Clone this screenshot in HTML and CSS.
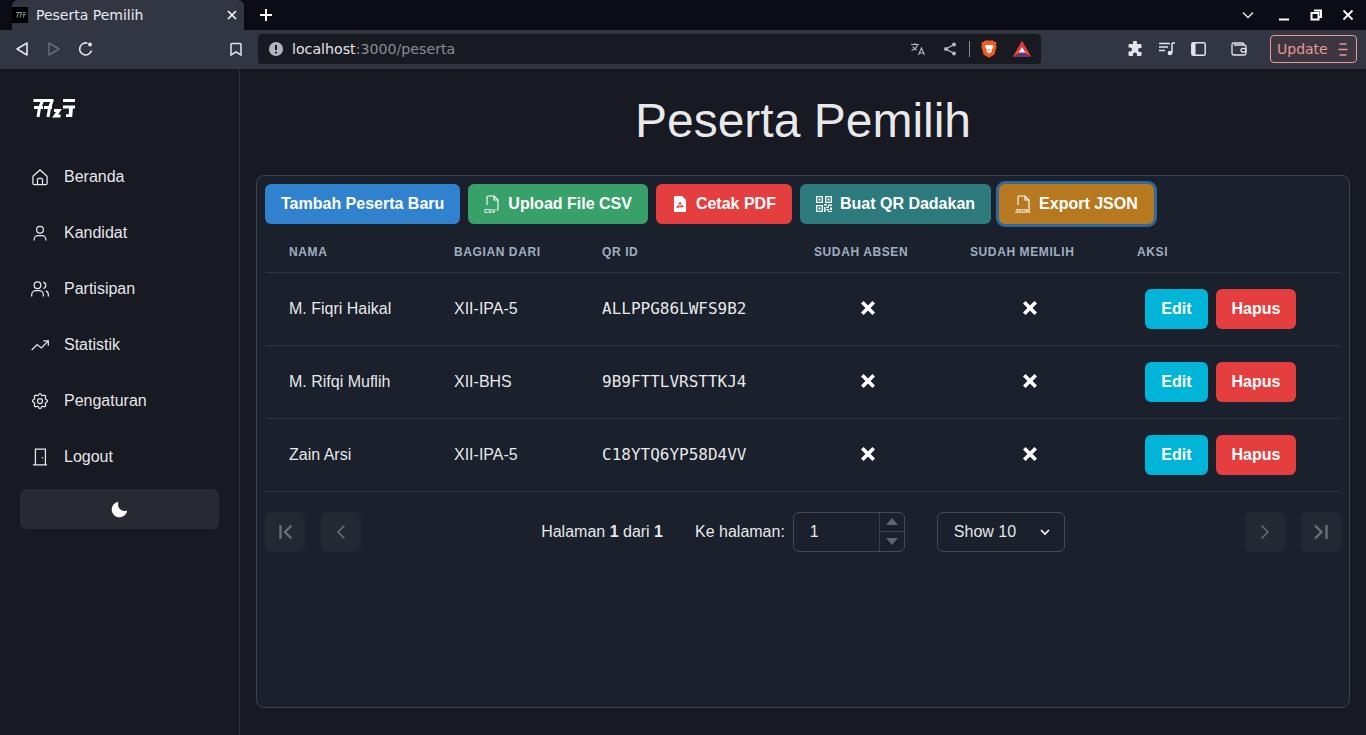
FILE: index.html
```html
<!DOCTYPE html>
<html lang="id">
<head>
    <meta charset="UTF-8">
    <meta name="viewport" content="width=device-width, initial-scale=1.0">
    <title>Peserta Pemilih</title>
    <link rel="stylesheet" href="styles.css">
</head>
<body>
  <!-- browser chrome -->
  <div class="tabbar">
      <div class="tab">
          <span class="favicon"><svg width="11" height="6" viewBox="0 0 20 12"><path d="M1 1h5L3 11M7 1h5L9 11M15 1h5M14 5h6M17 5l-1 6" fill="none" stroke="#bbb" stroke-width="1.6"/></svg></span>
          <span class="tab-title">Peserta Pemilih</span>
          <svg class="tab-close" width="10" height="10" viewBox="0 0 10 10"><path d="M1 1l8 8M9 1l-8 8" stroke="#fff" stroke-width="1.6"/></svg>
      </div>
      <svg class="new-tab" width="14" height="14" viewBox="0 0 14 14"><path d="M7 1v12M1 7h12" stroke="#fff" stroke-width="2"/></svg>
      <div class="win-controls">
          <svg class="win-chevron" width="12" height="8" viewBox="0 0 12 8"><path d="M1 1.5l5 5 5-5" fill="none" stroke="#e4e5ea" stroke-width="1.5"/></svg>
          <svg width="12" height="12" viewBox="0 0 12 12"><path d="M1 10.5h10" stroke="#fff" stroke-width="2"/></svg>
          <svg width="12" height="12" viewBox="0 0 12 12"><path d="M4 1.500h7v6.500h-2.500M1.500 4h7v6.500h-7z" fill="none" stroke="#fff" stroke-width="2"/></svg>
          <svg width="12" height="12" viewBox="0 0 12 12"><path d="M1.500 1.500l9 9M10.500 1.500l-9 9" stroke="#fff" stroke-width="1.8"/></svg>
      </div>
  </div>
  <div class="toolbar">
      <span class="tb-btn"><svg width="14" height="16" viewBox="0 0 14 16"><path d="M12 2v12L2 8z" fill="none" stroke="#e4e5ea" stroke-width="1.6" stroke-linejoin="round"/></svg></span>
      <span class="tb-btn"><svg width="14" height="16" viewBox="0 0 14 16"><path d="M2 2v12l10-6z" fill="none" stroke="#686c78" stroke-width="1.5" stroke-linejoin="round"/></svg></span>
      <span class="tb-btn"><svg width="16" height="16" viewBox="0 0 16 16"><path d="M13.500 9.500A6 6 0 1 1 9.500 2.200" fill="none" stroke="#e4e5ea" stroke-width="1.6"/><circle cx="12" cy="3.500" r="2" fill="#e4e5ea"/></svg></span>
      <span class="tb-btn bookmark"><svg width="12" height="14" viewBox="0 0 12 14"><path d="M2 1.500h8a1 1 0 0 1 1 1V13L6 9.800 1 13V2.500a1 1 0 0 1 1-1z" fill="none" stroke="#e4e5ea" stroke-width="1.5"/></svg></span>
      <div class="address">
          <svg class="info" width="14" height="14" viewBox="0 0 14 14"><circle cx="7" cy="7" r="7" fill="#b4b6be"/><path d="M7 3v5" stroke="#181a21" stroke-width="2"/><circle cx="7" cy="10.500" r="1.100" fill="#181a21"/></svg>
          <span class="url">localhost<span class="url-dim">:3000/peserta</span></span>
          <div class="address-icons">
              <svg class="translate" width="16" height="14" viewBox="0 0 16 14"><path d="M1 2.500h8M5 1v1.500M7.500 2.500C6.800 5 4.500 7.500 1.500 8.500M2.800 4.500c.8 1.600 2.400 3 4 3.800M8.500 13l3-7 3 7M9.500 11h4" fill="none" stroke="#b4b6be" stroke-width="1.1"/></svg>
              <svg class="share" width="14" height="14" viewBox="0 0 14 14"><path d="M11 2.500L3 7l8 4.500" fill="none" stroke="#b4b6be" stroke-width="1.4"/><circle cx="11" cy="2.500" r="2" fill="#b4b6be"/><circle cx="3" cy="7" r="2" fill="#b4b6be"/><circle cx="11" cy="11.500" r="2" fill="#b4b6be"/></svg>
              <span class="addr-sep"></span>
              <svg class="brave" width="16" height="18" viewBox="0 0 16 18"><path d="M4 .5h8l1.500 1.600L15.500 2 15 4.500l.7 1.500-2.200 8.500L8 17.800 2.500 14.500.3 6 1 4.500.5 2l2 .1z" fill="#f15a22"/><path d="M4 5.500L6.500 4.800 8 5.500l1.500-.7 2.500.7.500 1.500-2 3 .5 1.500L8 13.500 5.500 11.500 6 10 4 7z" fill="#fff"/><path d="M6.500 9.500h3L8 11z" fill="#f15a22"/></svg>
              <svg class="bat" width="18" height="16" viewBox="0 0 18 16"><path d="M9 0l9 15.500H0z" fill="#ff5000"/><path d="M0 15.500L9 10l9 5.500z" fill="#662d91"/><path d="M9 0L4 10l5 0 5 0z" fill="#e0314b"/><path d="M9 6l3.300 5.500H5.700z" fill="#fff"/></svg>
          </div>
      </div>
      <div class="toolbar-right">
          <svg width="16" height="16" viewBox="0 0 16 16"><path d="M6 1.500a2 2 0 0 1 4 0V3h3.500a1 1 0 0 1 1 1v3H13a2 2 0 0 0 0 4h1.500v3a1 1 0 0 1-1 1H10v-1.500a2 2 0 0 0-4 0V15H2.500a1 1 0 0 1-1-1v-3.500H3a2 2 0 0 0 0-4H1.500V4a1 1 0 0 1 1-1H6z" fill="#e4e5ea"/></svg>
          <svg width="16" height="14" viewBox="0 0 16 14"><path d="M0 1.500h11M0 5h9M0 8.500h6" stroke="#e4e5ea" stroke-width="1.4"/><path d="M13 1v10M13 1h3" stroke="#e4e5ea" stroke-width="1.5"/><circle cx="11" cy="11" r="2.300" fill="#e4e5ea"/></svg>
          <svg width="15" height="14" viewBox="0 0 15 14"><rect x=".8" y=".8" width="13.400" height="12.400" rx="1.500" fill="none" stroke="#e4e5ea" stroke-width="1.5"/><rect x="1" y="1" width="3.500" height="12" fill="#e4e5ea"/></svg>
          <svg class="wallet" width="16" height="14" viewBox="0 0 16 14"><path d="M13 3V2.500a1.500 1.500 0 0 0-1.500-1.500H2.500A1.500 1.500 0 0 0 1 2.500v8.500A2 2 0 0 0 3 13h10.500a1.500 1.500 0 0 0 1.500-1.500v-7A1.500 1.500 0 0 0 13.500 3H3" fill="none" stroke="#e4e5ea" stroke-width="1.3"/><rect x="10" y="6.500" width="5" height="3.500" rx="1.500" fill="none" stroke="#e4e5ea" stroke-width="1.3"/></svg>
          <div class="update">
              <span>Update</span>
              <svg width="10" height="13" viewBox="0 0 10 13"><path d="M1.500 1h7M.500 6.500h9M1.500 12h7" stroke="#e59b96" stroke-width="1.4"/></svg>
          </div>
      </div>
  </div>

  <div class="app">
      <aside class="sidebar">
          <div class="logo">
              <svg width="42" height="19" viewBox="0 0 42 19"><path d="M.5 1.500h10.500M1 8.500h9M9.500 2L6.500 9 5 18M11 1.500h9.500M11 8.500h8M19 2l-2.500 7-1.500 9M21 11.500h5L22 17h5.500M30 1.500h12M30 8h12" fill="none" stroke="#fff" stroke-width="3"/><path d="M36 8h4l-.8 10H33v-2.800h2.800z" fill="#fff"/></svg>
          </div>
          <nav class="nav">
              <a class="nav-item">
                  <svg class="nav-icon" viewBox="0 0 24 24"><path d="M3.500 11L12 3.500l8.500 7.500v8.500a1.500 1.500 0 0 1-1.500 1.500H5a1.500 1.500 0 0 1-1.500-1.500zM9 21v-6a1.500 1.500 0 0 1 1.500-1.500h3A1.500 1.500 0 0 1 15 15v6"/></svg>
                  Beranda
              </a>
              <a class="nav-item">
                  <svg class="nav-icon" viewBox="0 0 24 24"><circle cx="12" cy="8" r="4"/><path d="M5 21v-1.500A4.500 4.500 0 0 1 9.500 15h5a4.500 4.500 0 0 1 4.500 4.500V21"/></svg>
                  Kandidat
              </a>
              <a class="nav-item">
                  <svg class="nav-icon" viewBox="0 0 24 24"><circle cx="9" cy="7.500" r="4"/><path d="M2 21v-2a5 5 0 0 1 5-5h4a5 5 0 0 1 5 5v2M16 3.700a4 4 0 0 1 0 7.700M19 14.300a5 5 0 0 1 3 4.700v2"/></svg>
                  Partisipan
              </a>
              <a class="nav-item">
                  <svg class="nav-icon" viewBox="0 0 24 24"><path d="M2 18l6.500-6.500 5 4L22 7M16 7h6v6"/></svg>
                  Statistik
              </a>
              <a class="nav-item">
                  <svg class="nav-icon" viewBox="0 0 24 24"><path d="M10.325 4.317c.426-1.756 2.924-1.756 3.35 0a1.724 1.724 0 002.573 1.066c1.543-.94 3.31.826 2.37 2.37a1.724 1.724 0 001.065 2.572c1.756.426 1.756 2.924 0 3.35a1.724 1.724 0 00-1.066 2.573c.94 1.543-.826 3.31-2.37 2.37a1.724 1.724 0 00-2.572 1.065c-.426 1.756-2.924 1.756-3.35 0a1.724 1.724 0 00-2.573-1.066c-1.543.94-3.31-.826-2.37-2.37a1.724 1.724 0 00-1.065-2.572c-1.756-.426-1.756-2.924 0-3.35a1.724 1.724 0 001.066-2.573c-.94-1.543.826-3.31 2.37-2.37.996.608 2.296.07 2.572-1.065z"/><circle cx="12" cy="12" r="3"/></svg>
                  Pengaturan
              </a>
              <a class="nav-item">
                  <svg class="nav-icon" viewBox="0 0 24 24"><path d="M3.500 21.500h17M6.500 21.500V2.500h12v19M15 12v1.500"/></svg>
                  Logout
              </a>
          </nav>
          <button class="theme-btn" type="button"><svg width="17" height="17" viewBox="0 0 24 24"><path d="M21.400 13.700C20.600 13.900 19.800 14 19 14c-5 0-9-4-9-9 0-.8.100-1.600.3-2.400.1-.3 0-.7-.3-1-.3-.3-.6-.4-1-.3C4.300 2.700 1 7.100 1 12c0 6.100 4.900 11 11 11 4.900 0 9.300-3.300 10.600-8.100.1-.3 0-.7-.3-1-.2-.2-.6-.3-.9-.2z" fill="#fff"/></svg></button>
      </aside>

      <main class="main">
          <h1>Peserta Pemilih</h1>
          <div class="card">
              <div class="actions">
                  <button class="btn btn-blue" type="button">Tambah Peserta Baru</button>
                  <button class="btn btn-green" type="button">
                      <svg class="file-icon" width="16" height="18" viewBox="0 0 16 18"><path d="M3 10V2a1 1 0 0 1 1-1h6l4 4v9a1 1 0 0 1-1 1h-.500M10 1v4h4" fill="none" stroke="#fff" stroke-width="1.1"/><text x="0" y="17.500" class="file-label">CSV</text></svg>
                      Upload File CSV
                  </button>
                  <button class="btn btn-red" type="button">
                      <svg width="16" height="16" viewBox="-2 0 16 16"><path d="M1 0h7l4 4v11a1 1 0 0 1-1 1H1a1 1 0 0 1-1-1V1a1 1 0 0 1 1-1z" fill="#fff"/><path d="M6 6c-.2 1.800-1.500 4-3.500 5.500M6 6c.3 2 1.500 3.800 3.500 4.800-2.500-.4-5-.2-7 .7" fill="none" stroke="#e53e3e" stroke-width="1.1"/></svg>
                      Cetak PDF
                  </button>
                  <button class="btn btn-teal" type="button">
                      <svg width="16" height="16" viewBox="0 0 16 16" fill="#fff"><path d="M0 0h7v7H0zM1.300 1.300v4.400h4.400V1.300zM9 0h7v7H9zM10.300 1.300v4.400h4.400V1.300zM0 9h7v7H0zM1.300 10.300v4.400h4.400v-4.400z" fill-rule="evenodd"/><path d="M2.500 2.500h2v2h-2zM11.500 2.500h2v2h-2zM2.500 11.500h2v2h-2zM8 8h3v1.500H8zM12 8.500h4V10h-4zM8 11h1.500v5H8zM10.500 10.500H13V12h-2.500zM14 11.500h2V14h-2zM10.500 13H13v1.500h-2.500zM12 15h4v1h-4z"/></svg>
                      Buat QR Dadakan
                  </button>
                  <button class="btn btn-orange" type="button">
                      <svg class="file-icon" width="16" height="18" viewBox="0 0 16 18"><path d="M3 10V2a1 1 0 0 1 1-1h6l4 4v9M10 1v4h4" fill="none" stroke="#fff" stroke-width="1.1"/><text x="0" y="17.500" class="file-label">JSON</text></svg>
                      Export JSON
                  </button>
              </div>

              <table class="table">
                  <thead>
                      <tr>
                          <th class="col-nama">Nama</th>
                          <th class="col-bagian">Bagian Dari</th>
                          <th class="col-qr">QR ID</th>
                          <th class="col-absen">Sudah Absen</th>
                          <th class="col-memilih">Sudah Memilih</th>
                          <th class="col-aksi">Aksi</th>
                      </tr>
                  </thead>
                  <tbody>
                      <tr>
                          <td>M. Fiqri Haikal</td>
                          <td>XII-IPA-5</td>
                          <td class="mono">ALLPPG86LWFS9B2</td>
                          <td class="center"><svg class="cross" viewBox="0 0 14 14"><path d="M2 2l10 10M12 2L2 12"/></svg></td>
                          <td class="center"><svg class="cross" viewBox="0 0 14 14"><path d="M2 2l10 10M12 2L2 12"/></svg></td>
                          <td><div class="row-actions"><button class="btn btn-cyan" type="button">Edit</button><button class="btn btn-red" type="button">Hapus</button></div></td>
                      </tr>
                      <tr>
                          <td>M. Rifqi Muflih</td>
                          <td>XII-BHS</td>
                          <td class="mono">9B9FTTLVRSTTKJ4</td>
                          <td class="center"><svg class="cross" viewBox="0 0 14 14"><path d="M2 2l10 10M12 2L2 12"/></svg></td>
                          <td class="center"><svg class="cross" viewBox="0 0 14 14"><path d="M2 2l10 10M12 2L2 12"/></svg></td>
                          <td><div class="row-actions"><button class="btn btn-cyan" type="button">Edit</button><button class="btn btn-red" type="button">Hapus</button></div></td>
                      </tr>
                      <tr>
                          <td>Zain Arsi</td>
                          <td>XII-IPA-5</td>
                          <td class="mono">C18YTQ6YP58D4VV</td>
                          <td class="center"><svg class="cross" viewBox="0 0 14 14"><path d="M2 2l10 10M12 2L2 12"/></svg></td>
                          <td class="center"><svg class="cross" viewBox="0 0 14 14"><path d="M2 2l10 10M12 2L2 12"/></svg></td>
                          <td><div class="row-actions"><button class="btn btn-cyan" type="button">Edit</button><button class="btn btn-red" type="button">Hapus</button></div></td>
                      </tr>
                  </tbody>
              </table>

              <div class="pager">
                  <div class="pager-nav">
                      <button class="page-btn page-btn-end" type="button"><svg width="16" height="16" viewBox="0 0 16 16"><path d="M3.500 1v14M14.500 1.500L8 8l6.500 6.500"/></svg></button>
                      <button class="page-btn" type="button"><svg width="16" height="16" viewBox="0 0 16 16"><path d="M11.500 1.500L5 8l6.500 6.500"/></svg></button>
                  </div>
                  <div class="pager-center">
                      <span>Halaman <b>1</b> dari <b>1</b></span>
                      <div class="goto">
                          <span>Ke halaman:</span>
                          <div class="num-input">
                              <input type="number" value="1">
                              <div class="stepper">
                                  <span class="step"><svg width="12" height="7" viewBox="0 0 12 7"><path d="M6 0l6 7H0z"/></svg></span>
                                  <span class="step"><svg width="12" height="7" viewBox="0 0 12 7"><path d="M0 0h12L6 7z"/></svg></span>
                              </div>
                          </div>
                      </div>
                      <div class="select-wrap">
                          <select>
                              <option>Show 10</option>
                              <option>Show 20</option>
                              <option>Show 30</option>
                          </select>
                          <svg class="select-arrow" width="10" height="7" viewBox="0 0 10 7"><path d="M1 1l4 4 4-4"/></svg>
                      </div>
                  </div>
                  <div class="pager-nav">
                      <button class="page-btn" type="button"><svg width="16" height="16" viewBox="0 0 16 16"><path d="M4.500 1.500L11 8l-6.500 6.500"/></svg></button>
                      <button class="page-btn page-btn-end" type="button"><svg width="16" height="16" viewBox="0 0 16 16"><path d="M2 1.500L8.500 8 2 14.500M13.500 1v14"/></svg></button>
                  </div>
              </div>
          </div>
      </main>
  </div>
</body>
</html>
```

FILE: styles.css
```css
html, body {
    height: 100%;
}
body {
    font-family: "Liberation Sans", Arial, sans-serif;
    margin: 0;
    padding: 0;
    background-color: #171923;
    color: rgba(255,255,255,0.92);
    font-size: 16px;
    overflow: hidden;
}

/* browser chrome */
.tabbar {
    display: flex;
    align-items: center;
    height: 30px;
    padding-left: 12px;
    background-color: #0b0c15;
    font-family: "DejaVu Sans", sans-serif;
}
.tab {
    display: flex;
    align-items: center;
    width: 232px;
    height: 30px;
    box-sizing: border-box;
    padding: 0 7px 0 0;
    background-color: #323643;
    border-radius: 6px 6px 0 0;
    color: #e8e9ee;
    font-size: 14px;
}
.favicon {
    display: flex;
    align-items: center;
    justify-content: center;
    width: 16px;
    height: 16px;
    background-color: #000;
}
.tab-title {
    margin-left: 8px;
    flex: 1;
}
.new-tab {
    margin-left: 15px;
}
.win-controls {
    margin-left: auto;
    display: flex;
    align-items: center;
    gap: 20px;
    padding-right: 12px;
}
.win-chevron {
    margin-right: 4px;
}
.toolbar {
    display: flex;
    align-items: center;
    height: 39px;
    box-sizing: border-box;
    padding: 0 0 1px 6px;
    background-color: #323643;
    font-family: "DejaVu Sans", sans-serif;
}
.tb-btn {
    display: flex;
    align-items: center;
    justify-content: center;
    width: 32px;
    height: 32px;
}
.bookmark {
    margin-left: 118px;
    margin-right: 6px;
}
.address {
    display: flex;
    align-items: center;
    width: 783px;
    height: 30px;
    box-sizing: border-box;
    padding-left: 11px;
    background-color: #181a21;
    border-radius: 4px;
    font-size: 14.2px;
}
.url {
    margin-left: 9px;
    color: #e4e5ea;
}
.url-dim {
    color: #8a8c94;
}
.address-icons {
    margin-left: auto;
    display: flex;
    align-items: center;
}
.share {
    margin-left: 17px;
}
.addr-sep {
    width: 1px;
    height: 16px;
    margin-left: 12px;
    background-color: #8a8c94;
}
.brave {
    margin-left: 11px;
}
.bat {
    margin: 0 10px 0 16px;
}
.toolbar-right {
    display: flex;
    align-items: center;
    gap: 16px;
    margin-left: 86px;
}
.wallet {
    margin-left: 9px;
}
.update {
    display: flex;
    align-items: center;
    justify-content: space-between;
    width: 87px;
    height: 28px;
    box-sizing: border-box;
    margin-left: 7px;
    padding: 0 8px 0 6px;
    background-color: #3d3640;
    border: 1px solid #e59b96;
    border-radius: 4px;
    color: #e59b96;
    font-size: 14px;
}

/* app layout */
.app {
    display: flex;
    height: 666px;
}
.sidebar {
    width: 240px;
    box-sizing: border-box;
    padding: 0 20px;
    background-color: #171923;
    border-right: 1px solid #2d3240;
    flex-shrink: 0;
}
.logo {
    height: 80px;
    padding: 30px 0 0 13px;
    box-sizing: border-box;
}
.nav {
    display: flex;
    flex-direction: column;
}
.nav-item {
    display: flex;
    align-items: center;
    gap: 14px;
    height: 56px;
    padding-left: 10px;
    color: rgba(255,255,255,0.92);
}
.nav-icon {
    width: 20px;
    height: 20px;
    fill: none;
    stroke: #e8e9ee;
    stroke-width: 1.5;
    flex-shrink: 0;
}
.theme-btn {
    display: flex;
    align-items: center;
    justify-content: center;
    width: 199px;
    height: 40px;
    margin-top: 4px;
    background-color: #282a33;
    border: none;
    border-radius: 6px;
    padding: 0;
}

.main {
    flex: 1;
    padding: 23px 16px 0;
    min-width: 0;
}
h1 {
    margin: 0 0 25px;
    font-size: 48px;
    line-height: 58px;
    font-weight: 400;
    text-align: center;
}
.card {
    height: 533px;
    box-sizing: border-box;
    padding: 8px;
    background-color: #1a202c;
    border: 1px solid #3b4252;
    border-radius: 8px;
}
.actions {
    display: flex;
    gap: 8px;
}
.btn {
    display: inline-flex;
    align-items: center;
    gap: 8px;
    height: 40px;
    padding: 0 16px;
    border: none;
    border-radius: 6px;
    color: #fff;
    font-family: inherit;
    font-size: 16px;
    font-weight: 700;
    cursor: pointer;
}
.btn-blue { background-color: #3182ce; }
.btn-green { background-color: #38a169; }
.btn-red { background-color: #e53e3e; }
.btn-teal { background-color: #2c7a7b; }
.btn-orange {
    background-color: #b7791f;
    box-shadow: 0 0 0 3px rgba(66,153,225,0.6);
}
.btn-cyan { background-color: #00b5d8; }
.file-label {
    font-family: "Liberation Sans", sans-serif;
    font-size: 5.5px;
    font-weight: 700;
    fill: #fff;
}

/* table */
.table {
    width: 1076px;
    margin-top: 8px;
    border-collapse: collapse;
    table-layout: fixed;
}
th, td {
    padding: 0 0 0 24px;
    border-bottom: 1px solid #2d3442;
    text-align: left;
}
th {
    height: 40px;
    box-sizing: border-box;
    font-size: 12px;
    font-weight: 700;
    letter-spacing: 0.05em;
    text-transform: uppercase;
    color: #a0aec0;
}
td {
    height: 72px;
}
.col-nama { width: 165px; }
.col-bagian { width: 148px; }
.col-qr { width: 212px; }
.col-absen { width: 156px; }
.col-memilih { width: 167px; }
.col-aksi { width: 228px; }
.mono {
    font-family: "DejaVu Sans Mono", "Liberation Mono", monospace;
}
td.center {
    padding: 0;
    text-align: center;
}
.cross {
    display: block;
    width: 16px;
    height: 16px;
    margin: -2px auto 0;
    fill: none;
    stroke: #fff;
    stroke-width: 3.2;
}
.row-actions {
    display: flex;
    gap: 8px;
    padding-left: 8.3px;
}

/* pagination */
.pager {
    display: flex;
    align-items: center;
    justify-content: space-between;
    margin-top: 20px;
}
.pager-nav {
    display: flex;
    gap: 16px;
}
.page-btn {
    display: flex;
    align-items: center;
    justify-content: center;
    width: 40px;
    height: 40px;
    padding: 0;
    background-color: #232833;
    border: none;
    border-radius: 6px;
}
.page-btn svg {
    fill: none;
    stroke: #696e78;
    stroke-width: 1.5;
}
.page-btn-end svg {
    stroke-width: 2.4;
}
.pager-center {
    display: flex;
    align-items: center;
    gap: 32px;
}
.goto {
    display: flex;
    align-items: center;
    gap: 8px;
}
.num-input {
    display: flex;
    width: 112px;
    height: 40px;
    box-sizing: border-box;
    border: 1px solid #424855;
    border-radius: 6px;
}
.num-input input {
    flex: 1;
    min-width: 0;
    padding: 0 0 0 16px;
    background: none;
    border: none;
    outline: none;
    color: inherit;
    font: inherit;
    appearance: textfield;
}
.stepper {
    display: flex;
    flex-direction: column;
    width: 24px;
    border-left: 1px solid #3a404c;
}
.step {
    flex: 1;
    display: flex;
    align-items: center;
    justify-content: center;
    fill: #5f646e;
}
.step + .step {
    border-top: 1px solid #3a404c;
}
.select-wrap {
    position: relative;
    width: 128px;
    height: 40px;
}
.select-wrap select {
    width: 100%;
    height: 100%;
    padding: 0 0 0 16px;
    background: none;
    border: 1px solid #424855;
    border-radius: 6px;
    color: inherit;
    font: inherit;
    appearance: none;
}
.select-arrow {
    position: absolute;
    top: 17px;
    right: 15px;
    fill: none;
    stroke: #fff;
    stroke-width: 1.6;
}
```
